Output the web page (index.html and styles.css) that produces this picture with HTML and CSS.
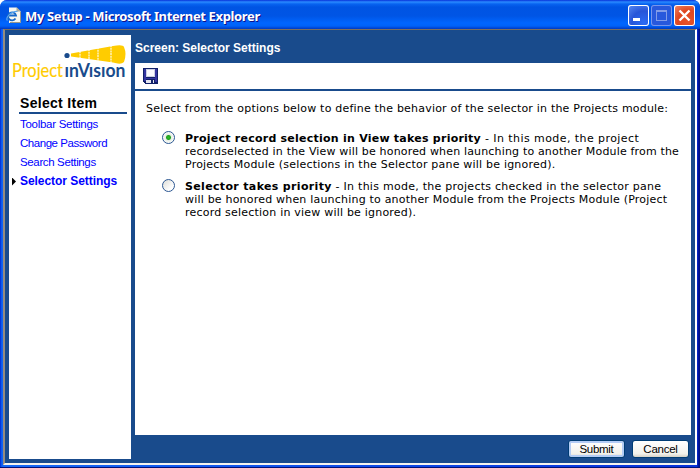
FILE: index.html
```
<!DOCTYPE html>
<html lang="en">
<head>
<meta charset="utf-8">
<title>My Setup</title>
<link rel="stylesheet" href="styles.css">
</head>
<body>
<div class="window">
  <header class="titlebar">
    <svg class="ie-icon" width="16" height="17" viewBox="0 0 16 17">
      <path d="M3 .5h7.500l4 4V16H3z" fill="#f7f7f0"/>
      <path d="M10.500 0v4.500H15z" fill="#aaa999"/>
      <path d="M14.500 5v10.500H4" fill="none" stroke="#98978b"/>
      <path d="M9.500 11.500A4 4 0 1 1 10 8.500H3" fill="none" stroke="#1768c8" stroke-width="1.800"/>
      <path d="M1.500 13.500C-1 11 5 4 11.500 4.500" fill="none" stroke="#57a5ee" stroke-width="1.200"/>
    </svg>
    <h1 class="window-title">My Setup - Microsoft Internet Explorer</h1>
    <div class="controls">
      <span class="control"><svg width="21" height="21"><path d="M5 13h7v3H5z" fill="#fff"/></svg></span>
      <span class="control disabled"><svg width="21" height="21"><path d="M5 5h11v11H5zM6 7v8h9V7z" fill="#829ce8" fill-rule="evenodd"/></svg></span>
      <span class="control close"><svg width="21" height="21"><path d="M5.500 5.500l10 10m0-10l-10 10" stroke="#fff" stroke-width="2.400"/></svg></span>
    </div>
  </header>
  <div class="client">
    <nav class="sidebar">
      <svg class="logo" width="122" height="48" viewBox="-2 0 122 48">
        <path d="M60 17.500L102 10Q112 8 113 11Q116 18 113 26Q110 29 102 26.500L60 20.500Z" fill="#fc0"/>
        <path d="M69 15v8M78 13v11M87 11v14M100 9v19" stroke="#fff" stroke-width="1.100" stroke-dasharray="2 .7"/>
        <text class="logo-project" x="1" y="40.500" textLength="51" lengthAdjust="spacingAndGlyphs">Project</text>
        <text class="logo-vision" x="53.500" y="40.500" textLength="61" lengthAdjust="spacingAndGlyphs">ınVısıon</text>
        <circle cx="56" cy="19.500" r="2.600" fill="#194b8c"/>
      </svg>
      <h2 class="menu-title">Select Item</h2>
      <ul class="menu">
        <li class="toolbar-link">Toolbar Settings</li>
        <li class="password-link">Change Password</li>
        <li class="search-link">Search Settings</li>
        <li class="selected">Selector Settings</li>
      </ul>
    </nav>
    <main class="main">
      <h2 class="screen-title">Screen: Selector Settings</h2>
      <div class="toolbar">
        <svg width="15" height="16" viewBox="0 0 15 16" shape-rendering="crispEdges">
          <path d="M0 0h15v16H2l-2-2z" fill="#102068"/><path d="M1 1h2v12H1zM12 1h2v13h-2z" fill="#3434a0"/>
          <path d="M3 1h9v8H3z" fill="#cbd0e4"/><path d="M4 2h7v6H4z" fill="#fafaff"/>
          <path d="M1 10h13v1H1z" fill="#3434a0"/><path d="M3 12h8v3H3z" fill="#e4e6f0"/><path d="M8 12h2v3H8z" fill="#102068"/>
        </svg>
      </div>
      <section class="content">
        <p class="intro">Select from the options below to define the behavior of the selector in the Projects module:</p>
        <div class="option">
          <span class="radio checked"></span>
          <p><span class="line a1"><b>Project record selection in View takes priority</b> - In this mode, the project</span>
          <span class="line a2">recordselected in the View will be honored when launching to another Module from the</span>
          <span class="line a3">Projects Module (selections in the Selector pane will be ignored).</span></p>
        </div>
        <div class="option">
          <span class="radio"></span>
          <p><span class="line b1"><b>Selector takes priority</b> - In this mode, the projects checked in the selector pane</span>
          <span class="line b2">will be honored when launching to another Module from the Projects Module (Project</span>
          <span class="line b3">record selection in view will be ignored).</span></p>
        </div>
      </section>
      <footer class="actions"><button class="submit">Submit</button><button>Cancel</button></footer>
    </main>
  </div>
</div>
</body>
</html>
```
FILE: styles.css
```
* { box-sizing: border-box; }
body { margin: 0; background: #fff; font-family: "DejaVu Sans", sans-serif; font-size: 11px; color: #000; }
h1, h2, p, ul { margin: 0; padding: 0; }
.window {
  width: 700px; height: 468px; display: flex; flex-direction: column; overflow: hidden;
  padding: 0 3px 2px; border-radius: 7px 7px 0 0;
  background: linear-gradient(90deg, #0019cf 0, #0855e8 1px, #1668f5 3px, #0831d9 697px, #0014a8 698px, #00107c 700px);
  border-bottom: 1px solid #00107c;
}
.titlebar {
  flex: none; height: 29px; margin: 0 -3px; padding: 5px 5px 0 6px; display: flex;
  background: linear-gradient(#0831d9 0, #2a8aff 2px, #0863f0 4px, #0054e3 7px, #0055e5 16px, #0066ff 23px, #0062f8 26px, #0046d5 28px, #003bc0 29px);
}
.ie-icon { margin-top: 2px; }
.window-title {
  flex: 1; padding: 2px 0 0 3px; white-space: nowrap; color: #fff; text-shadow: 1px 1px #0f1089;
  font: bold 13px/18px "Noto Sans", sans-serif; letter-spacing: -.36px;
}
.controls { display: flex; gap: 2px; }
.control {
  width: 21px; height: 21px; border-radius: 3px; box-shadow: inset 0 0 0 1px #fff;
  background: radial-gradient(circle at 75% 85%, #2b6bf4, #2855d8 50%, #5b8df4);
}
.control svg { display: block; }
.disabled { box-shadow: inset 0 0 0 1px #7896ec; background: #2858dc; }
.close { background: radial-gradient(circle at 70% 80%, #e4532a, #df4620 50%, #f08c6c); }
.client {
  flex: 1; display: flex; gap: 4px; padding: 5px 4px 4px; background: #194b8c;
  border: 1px solid #7b7060; border-left: 2px solid #958c80; border-right: 2px solid #fff; border-bottom: 2px solid #f5f4ef;
}
.sidebar { width: 122px; background: #fff; }
.logo { display: block; margin-top: 1px; }
.logo-project, .logo-vision { font-family: Lato, sans-serif; font-size: 19px; }
.logo-project { fill: #fc0; stroke: #fc0; stroke-width: .2px; }
.logo-vision { fill: #194b8c; font-weight: bold; }
.menu-title {
  margin: 11px 4px 0 10px; height: 19px; padding-left: 1px; border-bottom: 2px solid #194b8c;
  font: bold 14px/17px "Liberation Sans", sans-serif; letter-spacing: .3px;
}
.menu { margin-top: 1px; list-style: none; font: 11.5px/19px "Liberation Sans", sans-serif; color: #00f; white-space: nowrap; }
.menu li { height: 19px; padding-left: 11px; }
.toolbar-link { letter-spacing: -.28px; }
.password-link { letter-spacing: -.46px; }
.search-link { letter-spacing: -.36px; }
.menu .selected { display: flex; align-items: center; padding-left: 3px; font-size: 12px; font-weight: bold; letter-spacing: -.05px; }
.selected::before { content: ""; width: 4px; height: 8px; margin-right: 4px; background: #000; clip-path: polygon(0 0, 100% 50%, 0 100%); }
.main { flex: 1; display: flex; flex-direction: column; }
.screen-title { height: 28px; color: #fff; font: bold 12px/27px "Liberation Sans", sans-serif; letter-spacing: 0; }
.toolbar { height: 26px; padding: 5px 8px; background: #fff; }
.toolbar svg { display: block; }
.content { height: 344px; margin-top: 2px; padding: 11px 0 0 11px; background: #fff; line-height: 13px; white-space: nowrap; }
.intro { height: 14px; letter-spacing: .2px; }
.option { display: flex; margin: 16px 0 0 16px; }
.option + .option { margin-top: 9px; }
.radio { width: 13px; height: 13px; margin: -1px 10px 0 0; border: 1px solid #2c5792; border-radius: 50%; background: linear-gradient(135deg, #dcdcd6, #fff 75%); }
.checked { background: radial-gradient(circle at 50% 50%, #2dbd27 0, #21a121 2px, #e7eee4 3px, #fff 6px); }
.line { display: block; }
.a1 { letter-spacing: .43px; }
.a1 b { letter-spacing: .24px; }
.a2 { letter-spacing: .17px; }
.a3 { letter-spacing: .21px; }
.b1 { letter-spacing: .26px; }
.b1 b { letter-spacing: .34px; }
.b2 { letter-spacing: .2px; }
.b3 { letter-spacing: .21px; }
.actions { display: flex; gap: 7px; justify-content: flex-end; padding: 5px 2px 0 0; }
button {
  width: 57px; height: 18px; padding: 0; border: 1px solid #003c74; border-radius: 3px; color: #000;
  background: linear-gradient(#fff, #f2f1eb 80%, #d6d0c5); font: 11.5px/14px "Liberation Sans", sans-serif; letter-spacing: -.25px;
}
.submit { box-shadow: inset 0 0 0 2px #b3ccf5; letter-spacing: -.3px; }
```
